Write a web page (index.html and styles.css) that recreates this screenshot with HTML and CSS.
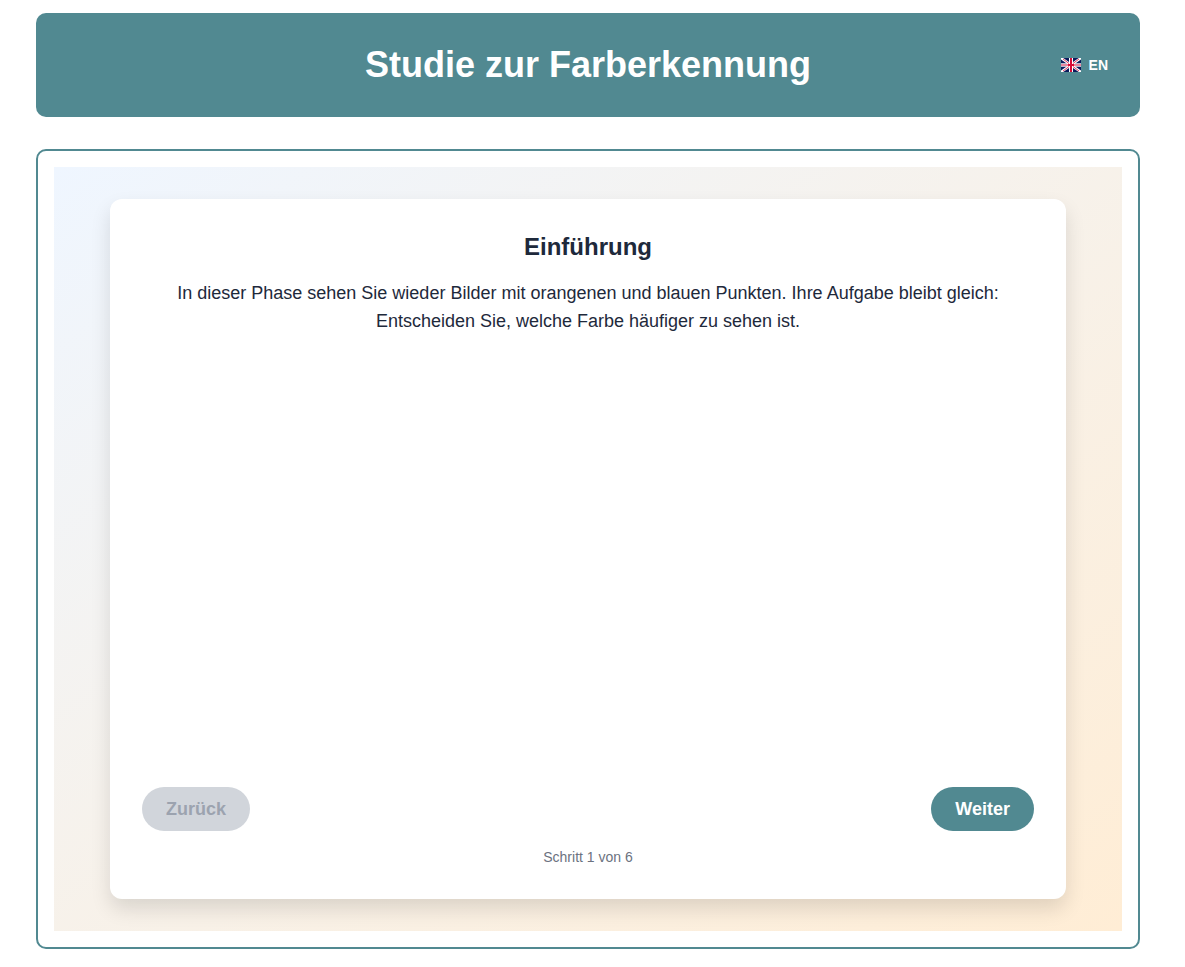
FILE: index.html
```html
<!DOCTYPE html>
<html lang="de">
<head>
  <meta charset="utf-8">
  <meta name="viewport" content="width=device-width, initial-scale=1">
  <title>Studie zur Farberkennung</title>
  <link rel="stylesheet" href="styles.css">
</head>
<body>
  <div class="page">
    <header class="header">
      <h1 class="header-title">Studie zur Farberkennung</h1>
      <button class="lang" type="button">
        <svg class="flag" viewBox="0 0 20 14" aria-hidden="true">
          <rect width="20" height="14" fill="#0a1a5c"/>
          <path d="M0 0L20 14M20 0L0 14" stroke="#fff" stroke-width="2.6"/>
          <path d="M10 0V14" stroke="#fff" stroke-width="4"/>
          <path d="M0 7H20" stroke="#fff" stroke-width="3.4"/>
          <path d="M0 7H20" stroke="#e8879c" stroke-width="2"/>
          <path d="M2 13L8 8.5M12 5.5L18 1M12 8.5L18 13M2 1L8 5.5" stroke="#d80a35" stroke-width="0.8"/>
          <path d="M10 0V14" stroke="#d80a35" stroke-width="2"/>
          <path d="M7 7H13" stroke="#d80a35" stroke-width="2"/>
        </svg>
        <span>EN</span>
      </button>
    </header>
    <main class="frame">
      <div class="backdrop">
        <section class="card">
          <h2 class="card-title">Einführung</h2>
          <p class="card-text">In dieser Phase sehen Sie wieder Bilder mit orangenen und blauen Punkten. Ihre Aufgabe bleibt gleich: Entscheiden Sie, welche Farbe häufiger zu sehen ist.</p>
          <nav class="actions">
            <button class="button" type="button" disabled>Zurück</button>
            <button class="button" type="button">Weiter</button>
          </nav>
          <p class="step">Schritt 1 von 6</p>
        </section>
      </div>
    </main>
  </div>
</body>
</html>
```

FILE: styles.css
```css
* {
  box-sizing: border-box;
}

body {
  margin: 0;
  background: #fff;
  color: #1e293b;
  font-family: "Liberation Sans", Arial, sans-serif;
}

h1,
h2,
p {
  margin: 0;
}

button {
  border: 0;
  font-family: inherit;
  cursor: pointer;
}

.page {
  display: flex;
  flex-direction: column;
  gap: 32px;
  min-height: 100vh;
  padding: 13px 45px 18px 36px;
}

.header {
  display: grid;
  grid-template-columns: 1fr auto 1fr;
  align-items: center;
  padding: 32px;
  border-radius: 10px;
  background: #518991;
  color: #fff;
}

.header-title {
  grid-column: 2;
  font-size: 36px;
  line-height: 40px;
}

.lang {
  display: flex;
  align-items: center;
  justify-self: end;
  gap: 8px;
  padding: 0;
  background: none;
  color: inherit;
  font-size: 14px;
  font-weight: 700;
  line-height: 20px;
}

.flag {
  width: 20px;
  height: 14px;
}

.frame {
  display: flex;
  flex: 1;
  padding: 16px;
  border: 2px solid #518991;
  border-radius: 10px;
}

.backdrop {
  display: flex;
  flex: 1;
  padding: 32px 56px;
  background: linear-gradient(to bottom right, #eff6ff, #ffedd5);
}

.card {
  display: flex;
  flex: 1;
  flex-direction: column;
  padding: 32px;
  border-radius: 12px;
  background: #fff;
  box-shadow: 0 10px 20px rgba(0, 0, 0, 0.12);
  text-align: center;
}

.card-title {
  margin-bottom: 16px;
  font-size: 24px;
  line-height: 32px;
}

.card-text {
  font-size: 18px;
  line-height: 28px;
}

.actions {
  display: flex;
  justify-content: space-between;
  margin-top: auto;
}

.button {
  padding: 8px 24px;
  border-radius: 22px;
  background: #518991;
  color: #fff;
  font-size: 18px;
  font-weight: 700;
  line-height: 28px;
}

.button:disabled {
  background: #d1d5db;
  color: #9ca3af;
  cursor: not-allowed;
}

.step {
  margin-top: 16px;
  color: #6b7280;
  font-size: 14px;
  line-height: 20px;
}
```
